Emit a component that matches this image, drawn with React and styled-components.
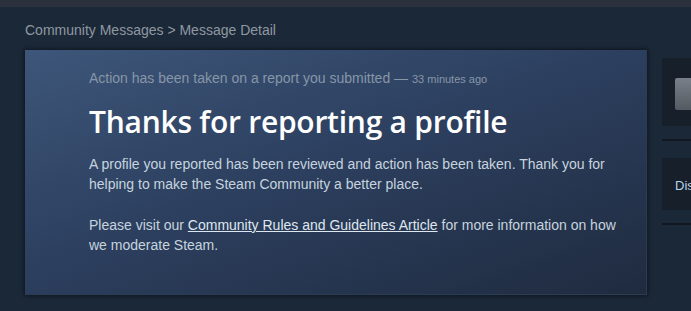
import React from 'react';
import styled, { createGlobalStyle } from 'styled-components';

const GlobalStyle = createGlobalStyle`
    html, body {
        margin: 0;
        padding: 0;
        background: #1b2838;
        font-family: "Liberation Sans", Arial, sans-serif;
        overflow: hidden;
    }
`;

const Page = styled.div`
    width: 691px;
    height: 311px;
    background: #1b2838;
    overflow: hidden;
`;

const TopStrip = styled.div`
    height: 7px;
    background: #2a313d;
`;

const Breadcrumb = styled.div`
    padding: 15px 0 0 25px;
    height: 28px;
    font-size: 14px;
    line-height: 16px;
    color: #8f98a0;
`;

const Columns = styled.div`
    display: flex;
    gap: 15px;
    padding-left: 25px;
`;

const MessagePanel = styled.div`
    flex: 0 0 622px;
    height: 245px;
    box-sizing: border-box;
    padding: 19px 24px 0 64px;
    background: linear-gradient(160deg, #3d5679 0%, #2d4060 45%, #1f2b3f 100%);
    box-shadow: 0 0 4px 1px rgba(0, 0, 0, 0.45);
    border-right: 1px solid #2b3c55;
    border-bottom: 1px solid #2b3c55;
`;

const Meta = styled.div`
    font-size: 14px;
    line-height: 18px;
    color: #8796a8;
`;

const MetaTime = styled.span`
    font-size: 11px;
`;

const Title = styled.h1`
    margin: 15px 0 13px;
    font-family: "Open Sans", "Noto Sans", sans-serif;
    font-weight: 600;
    font-size: 30px;
    line-height: 38px;
    color: #ffffff;
    letter-spacing: -0.25px;
`;

const Body = styled.p`
    margin: 0 0 21px;
    font-size: 14px;
    line-height: 20px;
    color: #c6d4df;
`;

const RulesLink = styled.a`
    color: #dfe7ee;
    text-decoration: underline;
`;

const Sidebar = styled.div`
    flex: 1 0 auto;
    padding-top: 8px;
`;

const SideBox = styled.div`
    background: #171f2b;
    height: ${p => p.$h}px;
    box-sizing: border-box;
    padding: ${p => p.$pad};
    font-size: 13px;
    color: #b8d4ea;
`;

const Divider = styled.div`
    height: 2px;
    margin: 13px 0 17px;
    background: #111821;
`;

const GreyButton = styled.div`
    width: 60px;
    height: 32px;
    border-radius: 2px;
    background: linear-gradient(180deg, #7a8089 0%, #545a62 100%);
`;

export default function App() {
    return (
        <Page>
            <GlobalStyle />
            <TopStrip />
            <Breadcrumb>Community Messages &gt; Message Detail</Breadcrumb>
            <Columns>
                <MessagePanel>
                    <Meta>
                        Action has been taken on a report you submitted — <MetaTime>33 minutes ago</MetaTime>
                    </Meta>
                    <Title>Thanks for reporting a profile</Title>
                    <Body>
                        A profile you reported has been reviewed and action has been taken. Thank you for helping to make the Steam Community a better place.
                    </Body>
                    <Body>
                        Please visit our <RulesLink href="#">Community Rules and Guidelines Article</RulesLink> for more information on how we moderate Steam.
                    </Body>
                </MessagePanel>
                <Sidebar>
                    <SideBox $h={68} $pad="20px 0 0 13px">
                        <GreyButton />
                    </SideBox>
                    <Divider />
                    <SideBox $h={52} $pad="20px 0 0 13px">Discussions</SideBox>
                    <Divider />
                </Sidebar>
            </Columns>
        </Page>
    );
}
